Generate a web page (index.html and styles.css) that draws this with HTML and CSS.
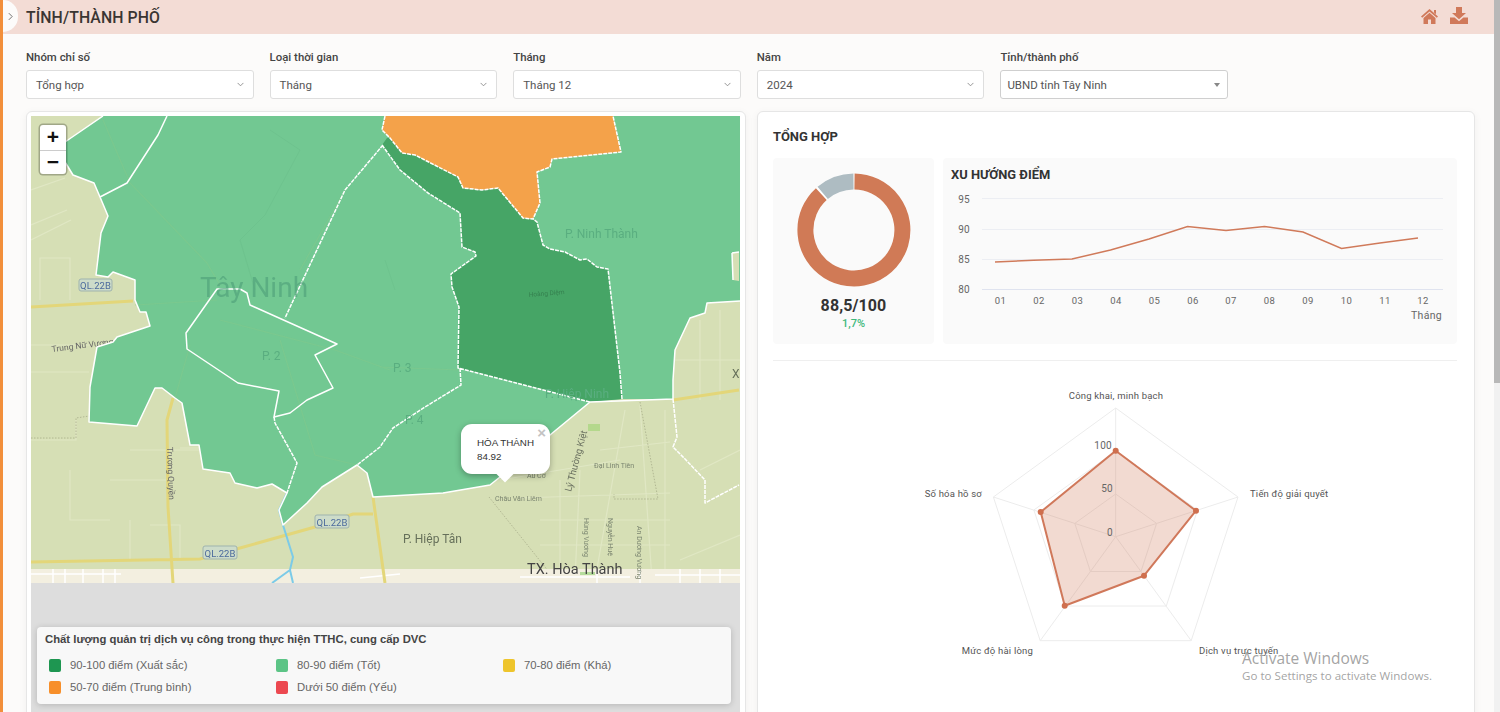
FILE: index.html
```html
<!DOCTYPE html>
<html lang="vi">
<head>
<meta charset="utf-8">
<title>Tỉnh/Thành phố</title>
<link rel="stylesheet" href="styles.css">
</head>
<body>
<div class="page">
  <header class="topbar">
    <span class="toggle"><svg class="toggle-ico" viewBox="0 0 6 10"><path d="M1 1l4 4-4 4"/></svg></span>
    <h1 class="page-title">TỈNH/THÀNH PHỐ</h1>
    <div class="top-actions">
      <svg class="ico-home" viewBox="0 0 17 15"><path d="M8.5 0L17 7.5 15.8 8.8 8.5 2.5 1.2 8.8 0 7.5zM13 1h2v4.2L13 3.5zM8.5 3.8L14.5 9v6H10v-4.5H7V15H2.5V9z"/></svg>
      <svg class="ico-down" viewBox="0 0 18 17"><path d="M6 0h6v6h4l-7 6.2L2 6h4zM0 10.5h4.6L9 14.2l4.400-3.700H18V17H0z"/></svg>
    </div>
  </header>

  <section class="filters">
    <div class="field"><label class="field-label">Nhóm chỉ số</label><div class="select"><span>Tổng hợp</span><svg class="chev" viewBox="0 0 8 5"><path d="M.7.7L4 4 7.300.7"/></svg></div></div>
    <div class="field"><label class="field-label">Loại thời gian</label><div class="select"><span>Tháng</span><svg class="chev" viewBox="0 0 8 5"><path d="M.7.7L4 4 7.300.7"/></svg></div></div>
    <div class="field"><label class="field-label">Tháng</label><div class="select"><span>Tháng 12</span><svg class="chev" viewBox="0 0 8 5"><path d="M.7.7L4 4 7.300.7"/></svg></div></div>
    <div class="field"><label class="field-label">Năm</label><div class="select"><span>2024</span><svg class="chev" viewBox="0 0 8 5"><path d="M.7.7L4 4 7.300.7"/></svg></div></div>
    <div class="field"><label class="field-label">Tỉnh/thành phố</label><div class="select select-alt"><span>UBND tỉnh Tây Ninh</span><i class="caret"></i></div></div>
  </section>

  <main class="content">
    <section class="card map-card">
      <div class="map">
        <svg class="map-svg" viewBox="31 116 709 467">
          <rect class="land" x="31" y="116" width="709" height="467"/>
          <!-- land streets -->
          <path class="street" d="M31 190l34-12M31 240l40-20M31 225l36-15M40 300v-42h30v42M31 345h60M31 372h58M31 440h45v-20M70 470v50h40M130 450h70M110 480h60M130 520v40M150 525h30v35M180 448h40M625 410l-30 170M640 405l12 175M665 410v170M600 450l70-8M520 498l150-5M500 480l120-20M540 520h130M540 545h130M560 480v100M580 470l-5 110M700 320v80M720 310v90M675 360h65M700 470l40-20M680 560l60-25"/>
          <path class="street-dot" d="M640 402l18 97h-44v-5M489 497l60 75M31 438h45v-20l20-3"/>
          <text class="ml-xs" transform="translate(52 352) rotate(-7)">Trung Nữ Vương</text>
          <!-- bottom band -->
          <rect class="band" x="31" y="569" width="709" height="14"/>
          <path class="band-st" d="M31 574h90M53 569v14M65 569v14M83 569v14M103 569v14M115 569v14M360 578l40-4M520 577h110M597 569v14M640 569v14M680 569v14M700 569v14M720 569v14M655 575h85"/>
          <rect class="band-g" x="580" y="572" width="15" height="3"/>
          <rect class="park" x="588" y="424" width="12" height="7"/>
          <!-- roads -->
          <path class="road" d="M31 562L200 559 240 548 315 527 353 514 373 514M373 497L385 583M173 398L167 420 168 507 173 583M31 307L133 301M673 400L739 390"/>
          <path class="river" d="M287 493L279 510 283 525 293 557 290 570 272 583M290 570L293 583"/>
          <!-- regions -->
          <path class="gr" d="M103 116L65 142 65 162 73 175 94 183 100 197 108 216 101 233 96 275 108 277 113 272 135 280 135 300 140 312 146 312 150 326 117 337 113 342 97 347 90 387 89 422 137 426 155 388 162 388 175 398 182 403 190 445 199 445 203 469 230 473 235 483 257 488 272 484 287 493 279 510 283 525 307 503 322 487 357 465 367 473 373 497 443 493 490 485 500 477 550 435 590 402 622 399 673 399 673 380 675 350 690 318 705 313 707 303 740 301V116z"/>
          <path class="land" d="M732 253L739 252V281L733 280z"/>
          <path class="gr-dk" d="M387 138L382 145 400 170 428 193 460 213 462 247 475 252 476 256 451 274 452 287 459 307 458 368 590 402 622 399 620 373 608 269 597 267 587 259 580 260 565 252 550 249 543 245 537 222 533 219 523 218 498 188 482 190 463 188 458 177 415 155 402 153 390 138z"/>
          <path class="or" d="M385 116L382 130 390 138 402 153 415 155 458 177 463 188 482 190 498 188 523 218 533 219 540 203 537 172 550 167 552 159 621 152 613 116z"/>
          <!-- faint roads on polygons -->
          <path class="faint" d="M103 120L130 183 207 263 220 285M345 190L300 270M220 320L335 350 390 370M280 340L315 455 357 465M190 345L175 398M135 305L217 300M460 370L380 367"/>
          <path class="faint-dk" d="M270 130L300 150 265 215 240 240 255 290M395 290L385 260"/>
          <!-- borders -->
          <path class="bd" d="M103 116L65 142 65 162 73 175 94 183 100 197 108 216 101 233 96 275 108 277 113 272 135 280 135 300 140 312 146 312 150 326 117 337 113 342 97 347 90 387 89 422 137 426 155 388 162 388 175 398 182 403 190 445 199 445 203 469 230 473 235 483 257 488 272 484 287 493 279 510 283 525 307 503 322 487 357 465 367 473 373 497 443 493 490 485 500 477 550 435 590 402 673 399 673 380 675 350 690 318 705 313 707 303 740 301M167 116L158 135 127 183 100 197M217 289L240 289 247 293 250 305 337 344 315 355 333 388 307 400 290 413 274 417 279 391 238 383 187 349 186 333zM217 289L186 333M732 253L739 252M732 253L733 280"/>
          <path class="bd-dash" d="M383 145L345 190 285 318M274 417L275 423 297 463 287 493M460 368L461 385 425 407 393 428 380 447 357 465M382 145L400 170 428 193 460 213 462 247 475 252 476 256 451 274 452 287 459 307 458 368 590 402M622 399L620 373 608 269 597 267 587 259 580 260 565 252 550 249 543 245 537 222 533 219M385 116L382 130 390 138 402 153 415 155 458 177 463 188 482 190 498 188 523 218 533 219 540 203 537 172 550 167 552 159 621 152 613 116M673 399L677 437 673 447 686 460 705 480 705 503 739 485"/>
          <!-- labels -->
          <text class="ml-big" x="200" y="297">Tây Ninh</text>
          <text class="ml-gr" x="565" y="238">P. Ninh Thành</text>
          <text class="ml-gr" x="262" y="360">P. 2</text>
          <text class="ml-gr" x="393" y="372">P. 3</text>
          <text class="ml-gr" x="405" y="424">P. 4</text>
          <text class="ml-gr" x="545" y="398">P. Hiệp Ninh</text>
          <text class="ml-md" x="403" y="543">P. Hiệp Tân</text>
          <text class="ml-lg" x="527" y="574">TX. Hòa Thành</text>
          <text class="ml-md" x="732" y="378">X</text>
          <text class="ml-xs" transform="translate(167 447) rotate(88)">Trương Quyền</text>
          <text class="ml-xs2" transform="translate(571 492) rotate(-75)">Lý Thường Kiệt</text>
          <text class="ml-tiny" x="495" y="501">Châu Văn Liêm</text>
          <text class="ml-tiny" x="527" y="478">Âu Cơ</text>
          <text class="ml-tiny" x="594" y="468">Đại Linh Tiên</text>
          <text class="ml-tiny" transform="translate(584 518) rotate(90)">Hùng Vương</text>
          <text class="ml-tiny" transform="translate(608 518) rotate(90)">Nguyễn Huệ</text>
          <text class="ml-tiny" transform="translate(637 526) rotate(90)">An Dương Vương</text>
          <text class="ml-dk" transform="translate(529 297) rotate(-5)">Hoàng Diệm</text>
          <g class="shield"><rect x="79" y="279" width="33" height="12" rx="2"/><text x="95.500" y="288.500">QL.22B</text></g>
          <g class="shield"><rect x="203" y="546" width="34" height="13" rx="2"/><text x="220" y="556.500">QL.22B</text></g>
          <g class="shield"><rect x="315" y="515" width="34" height="13" rx="2"/><text x="332" y="525.500">QL.22B</text></g>
        </svg>
        <div class="zoom-ctl"><span class="zoom-btn">+</span><span class="zoom-btn">−</span></div>
        <div class="popup">
          <span class="popup-x">×</span>
          <div>HÒA THÀNH</div>
          <div>84.92</div>
          <i class="popup-tip"></i>
        </div>
        <div class="map-fill">
          <div class="legend">
            <div class="legend-title">Chất lượng quản trị dịch vụ công trong thực hiện TTHC, cung cấp DVC</div>
            <div class="legend-grid">
              <div class="legend-item"><i class="sw sw-1"></i>90-100 điểm (Xuất sắc)</div>
              <div class="legend-item"><i class="sw sw-2"></i>80-90 điểm (Tốt)</div>
              <div class="legend-item"><i class="sw sw-3"></i>70-80 điểm (Khá)</div>
              <div class="legend-item"><i class="sw sw-4"></i>50-70 điểm (Trung bình)</div>
              <div class="legend-item"><i class="sw sw-5"></i>Dưới 50 điểm (Yếu)</div>
            </div>
          </div>
        </div>
      </div>
    </section>

    <section class="card info-card">
      <h2 class="info-title">TỔNG HỢP</h2>
      <div class="top-row">
        <div class="panel donut-panel">
          <svg class="donut" viewBox="0 0 114 114">
            <circle class="donut-bg" cx="57" cy="57" r="48.500"/>
            <path class="donut-gray" d="M56.500 8.500A48.500 48.500 0 0 0 25.700 19.900"/>
            <path class="donut-main" d="M57.500 8.500A48.500 48.500 0 1 1 24.300 21.100"/>
          </svg>
          <div class="score">88,5/100</div>
          <div class="delta">1,7%</div>
        </div>
        <div class="panel trend-panel">
          <h3 class="trend-title">XU HƯỚNG ĐIỂM</h3>
          <svg class="trend" viewBox="943 184 514 160">
            <path class="grid-l" d="M982 198.500H1443M982 229.500H1443M982 259.500H1443"/>
            <path class="grid-ax" d="M982 289.500H1443"/>
            <g class="ax-y"><text x="970" y="203">95</text><text x="970" y="233">90</text><text x="970" y="263">85</text><text x="970" y="293">80</text></g>
            <g class="ax-x"><text x="1000.500" y="304">01</text><text x="1039" y="304">02</text><text x="1077.500" y="304">03</text><text x="1116" y="304">04</text><text x="1154.500" y="304">05</text><text x="1193" y="304">06</text><text x="1231" y="304">07</text><text x="1269.500" y="304">08</text><text x="1308" y="304">09</text><text x="1346.500" y="304">10</text><text x="1385" y="304">11</text><text x="1423" y="304">12</text></g>
            <text class="ax-name" x="1442" y="319">Tháng</text>
            <polyline class="trend-line" points="995,262 1033.500,260.300 1072,259 1110.500,250 1149,239 1187.500,226.500 1226,230.500 1264.500,226.500 1303,232 1341.500,248.500 1380,243 1418,238"/>
          </svg>
        </div>
      </div>
      <div class="sep"></div>
      <svg class="radar" viewBox="773 361 684 340">
        <path class="r-grid" d="M1115.700 408L1238 497 1191.200 640.700H1040.200L993.400 497zM1115.700 451L1197.500 510 1166.300 606H1065.100L1033.900 510zM1115.700 494L1156.600 523.400 1141 571.500H1090.400L1074.800 523.400zM1115.700 536.700V408M1115.700 536.700L1238 497M1115.700 536.700L1191.200 640.700M1115.700 536.700L1040.200 640.700M1115.700 536.700L993.400 497"/>
        <path class="r-area" d="M1115.700 450.700L1196 510.700 1144 575.700 1064.700 605.700 1040.700 512z"/>
        <g class="r-pts"><circle cx="1115.700" cy="450.700" r="3"/><circle cx="1196" cy="510.700" r="3"/><circle cx="1144" cy="575.700" r="3"/><circle cx="1064.700" cy="605.700" r="3"/><circle cx="1040.700" cy="512" r="3"/></g>
        <g class="r-ticks"><text x="1112" y="449">100</text><text x="1113" y="492">50</text><text x="1113" y="536">0</text></g>
        <g class="r-lab">
          <text x="1116" y="399" text-anchor="middle">Công khai, minh bạch</text>
          <text x="1250" y="497">Tiến độ giải quyết</text>
          <text x="1199" y="654">Dịch vụ trực tuyến</text>
          <text x="1033" y="654" text-anchor="end">Mức độ hài lòng</text>
          <text x="982" y="497" text-anchor="end">Số hóa hồ sơ</text>
        </g>
      </svg>
    </section>
  </main>
</div>
<div class="scrollbar"><div class="scroll-thumb"></div></div>
<div class="activate">
  <div class="activate-t">Activate Windows</div>
  <div class="activate-s">Go to Settings to activate Windows.</div>
</div>
</body>
</html>
```

FILE: styles.css
```css
* { box-sizing: border-box; }
html, body { margin: 0; height: 712px; overflow: hidden; }
body { font-family: Roboto, "Liberation Sans", sans-serif; color: #333; background: #fcfbfa; position: relative; }
.page { height: 712px; border-left: 3px solid #f28f3b; overflow: hidden; }

/* top bar */
.topbar { height: 34px; background: #f3dcd5; display: flex; align-items: center; padding: 0 32px 0 0; position: relative; }
.toggle { width: 15px; height: 32px; background: #fcfbfa; border-radius: 0 16px 16px 0; display: flex; align-items: center; justify-content: center; margin-top: -2px; }
.toggle-ico { width: 5px; height: 9px; fill: none; stroke: #666; stroke-width: 1.100; }
.page-title { margin: 0 0 0 8px; font-size: 15.800px; font-weight: 500; color: #3a3532; letter-spacing: .1px; }
.top-actions { margin-left: auto; display: flex; align-items: center; gap: 12px; fill: #d0795a; margin-top: -4px; }
.ico-home { width: 17px; height: 15px; margin-top: 2px; }
.ico-down { width: 18px; height: 17px; }

/* filters */
.filters { display: flex; gap: 16px; padding: 16px 0 0 23px; }
.field { width: 227.600px; }
.field-label { display: block; font-size: 11.400px; line-height: 14px; font-weight: 500; color: #444; margin-bottom: 6px; }
.select { height: 29px; background: #fff; border: 1px solid #dedede; border-radius: 3px; display: flex; align-items: center; justify-content: space-between; padding: 0 9px 0 9px; font-size: 11.500px; color: #555; }
.select-alt { padding: 0 7px 0 6px; border-color: #cfcfcf; }
.chev { width: 7px; height: 5px; fill: none; stroke: #888; stroke-width: 1; }
.caret { width: 0; height: 0; border-left: 3.500px solid transparent; border-right: 3.500px solid transparent; border-top: 4px solid #888; }

/* layout */
.content { display: flex; gap: 11px; padding: 12px 0 0 23px; align-items: flex-start; }
.card { background: #fff; border: 1px solid #e6e6e6; border-radius: 6px; box-shadow: 0 2px 8px rgba(0,0,0,.05); height: 640px; }
.map-card { width: 720px; padding: 4px 5px 0 4px; }
.info-card { width: 718px; padding: 0 17px 0 15px; }

/* map */
.map { position: relative; width: 709px; }
.map-svg { display: block; width: 709px; height: 467px; filter: blur(.35px); }
.land { fill: #d6dfb5; }
.gr { fill: #72c892; }
.gr-dk { fill: #46a566; }
.or { fill: #f4a24a; }
.street { fill: none; stroke: #e0e7c4; stroke-width: 1.200; }
.street-dot { fill: none; stroke: #a8ad8a; stroke-width: .8; stroke-dasharray: 1.500 1.500; }
.band { fill: #f3efe0; }
.band-st { fill: none; stroke: #fff; stroke-width: 1.500; }
.band-g { fill: #b5dc9c; }
.park { fill: #b4d88c; }
.road { fill: none; stroke: #e3d679; stroke-width: 3; }
.river { fill: none; stroke: #7ccbe8; stroke-width: 2; }
.faint { fill: none; stroke: #84c98c; stroke-width: 1.200; opacity: .5; }
.faint-dk { fill: none; stroke: #6abd8a; stroke-width: 1; opacity: .5; }
.bd { fill: none; stroke: #fff; stroke-width: 1.500; stroke-linejoin: round; }
.bd-dash { fill: none; stroke: #fff; stroke-width: 1.500; stroke-dasharray: 4 1; stroke-linejoin: round; }
.map-svg text { font-family: Roboto, sans-serif; }
.ml-big { font-size: 28px; fill: #4d9e78; opacity: .6; }
.ml-gr { font-size: 12px; fill: #5aae80; }
.ml-md { font-size: 12px; fill: #66705a; }
.ml-lg { font-size: 14.500px; fill: #444; }
.ml-xs { font-size: 8.500px; fill: #666; }
.ml-xs2 { font-size: 9.500px; fill: #6a7060; }
.ml-tiny { font-size: 7px; fill: #7b8570; }
.ml-dk { font-size: 6.500px; fill: #35804f; }
.shield rect { fill: #cddcc9; stroke: #9fb3ae; stroke-width: 1; }
.shield text { font-size: 9.500px; fill: #4b6a9c; text-anchor: middle; }

.zoom-ctl { position: absolute; left: 9px; top: 9px; width: 26px; display: flex; flex-direction: column; background: #fff; border-radius: 3px; box-shadow: 0 0 0 1.500px rgba(0,0,0,.25); }
.zoom-btn { height: 24.500px; display: flex; align-items: center; justify-content: center; font: 700 21px "Liberation Sans", sans-serif; color: #111; }
.zoom-btn + .zoom-btn { border-top: 1px solid #ccc; }

.popup { position: absolute; left: 430px; top: 308px; width: 89px; height: 50px; background: #fff; border-radius: 11px; box-shadow: 0 2px 6px rgba(0,0,0,.3); padding: 12px 0 0 16px; font: 9.800px/14px "Liberation Sans", sans-serif; color: #333; }
.popup-x { position: absolute; right: 4px; top: 2px; font-size: 15px; font-weight: 700; line-height: 14px; color: #c3c3c3; }
.popup-tip { position: absolute; left: 38px; bottom: -6px; width: 12px; height: 12px; background: #fff; transform: rotate(45deg); }

.map-fill { height: 130px; background: #ddd; padding: 44px 9px 0 6px; }
.legend { height: 77px; background: #f8f8f8; border-radius: 4px; box-shadow: 0 1px 6px rgba(0,0,0,.18); padding: 5px 8px 0 8px; font-family: "Liberation Sans", sans-serif; }
.legend-title { font-size: 11.300px; line-height: 14px; font-weight: 700; color: #444; }
.legend-grid { display: grid; grid-template-columns: 227px 227px 1fr; row-gap: 9px; margin-top: 13px; padding-left: 4px; }
.legend-item { display: flex; align-items: center; gap: 9px; font-size: 11.300px; line-height: 13px; color: #666; }
.sw { width: 12px; height: 13px; border-radius: 2px; }
.sw-1 { background: #1e9651; }
.sw-2 { background: #5cc486; }
.sw-3 { background: #eec52c; }
.sw-4 { background: #f78f2a; }
.sw-5 { background: #ec4850; }

/* info */
.info-title { margin: 0; height: 46px; padding-top: 17px; font-size: 13px; line-height: 15px; font-weight: 700; color: #333; }
.top-row { display: flex; gap: 9px; }
.panel { background: #fafafa; border-radius: 4px; height: 186px; }
.donut-panel { width: 161px; display: flex; flex-direction: column; align-items: center; padding-top: 15px; }
.donut { width: 114px; height: 114px; }
.donut-bg { fill: none; stroke: #fff; stroke-width: 16; }
.donut-main { fill: none; stroke: #d07a56; stroke-width: 16; }
.donut-gray { fill: none; stroke: #aebcc2; stroke-width: 16; }
.score { font-size: 16px; line-height: 20px; font-weight: 700; color: #333; margin-top: 9px; letter-spacing: .1px; }
.delta { font-size: 11px; line-height: 14px; font-weight: 500; color: #3fb97c; margin-top: 1px; }
.trend-panel { width: 514px; }
.trend-title { margin: 0; height: 26px; padding: 9px 0 0 8px; font-size: 12.900px; line-height: 15px; font-weight: 700; color: #333; }
.trend { display: block; width: 514px; height: 160px; }
.grid-l { fill: none; stroke: #eceef3; stroke-width: 1; }
.grid-ax { fill: none; stroke: #dfe3ef; stroke-width: 1; }
.ax-y text { font-size: 10px; fill: #666; text-anchor: end; letter-spacing: .3px; }
.ax-x text { font-size: 9.500px; fill: #666; text-anchor: middle; letter-spacing: .5px; }
.ax-name { font-size: 10.500px; fill: #666; text-anchor: end; letter-spacing: .3px; }
.trend-line { fill: none; stroke: #d07a5a; stroke-width: 1.500; }
.sep { height: 1px; background: #efefef; margin-top: 16px; }
.radar { display: block; width: 684px; height: 340px; }
.r-grid { fill: none; stroke: #ececec; stroke-width: 1; }
.r-area { fill: rgba(208,121,90,.28); stroke: #d0785a; stroke-width: 2; stroke-linejoin: round; }
.r-pts { fill: #cf6f4e; }
.r-ticks text { font-size: 10px; fill: #666; text-anchor: end; letter-spacing: .3px; }
.r-lab text { font-size: 9.500px; fill: #555; letter-spacing: .2px; }

/* overlays */
.scrollbar { position: absolute; right: 0; top: 0; width: 6px; height: 712px; background: #f1f1f1; }
.scroll-thumb { width: 6px; height: 383px; background: #b8b8b8; }
.activate { position: absolute; left: 1242px; top: 648px; color: rgba(140,140,140,.8); font-family: "Open Sans", sans-serif; pointer-events: none; }
.activate-t { font-size: 15.500px; line-height: 20px; }
.activate-s { font-size: 11.600px; line-height: 16px; margin-top: 0; }
```
